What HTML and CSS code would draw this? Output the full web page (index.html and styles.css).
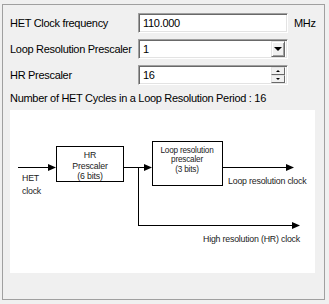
FILE: index.html
```html
<!DOCTYPE html>
<html lang="en">
<head>
    <meta charset="UTF-8">
    <title>HET Clock</title>
    <link rel="stylesheet" href="styles.css">
</head>
<body>
    <div class="panel">
        <!-- Champs de configuration -->
        <div class="form">
            <div class="label">HET Clock frequency</div>
            <div class="field">110.000</div>
            <div class="unit">MHz</div>

            <div class="label">Loop Resolution Prescaler</div>
            <div class="field">
                <span>1</span>
                <span class="drop-btn"><span class="tri-down"></span></span>
            </div>
            <div></div>

            <div class="label">HR Prescaler</div>
            <div class="field">
                <span>16</span>
                <span class="spin">
                    <span class="spin-btn"><span class="tri-up small"></span></span>
                    <span class="spin-btn"><span class="tri-down small"></span></span>
                </span>
            </div>
            <div></div>
        </div>

        <div class="summary">Number of HET Cycles in a Loop Resolution Period : 16</div>

        <!-- Schéma -->
        <div class="diagram">
            <svg width="305" height="163" viewBox="0 0 305 163">
                <g stroke="#000" stroke-width="1" fill="none">
                    <line x1="8" y1="57.5" x2="40" y2="57.5"/>
                    <rect x="46.5" y="36.5" width="67" height="35"/>
                    <line x1="114" y1="57.5" x2="136" y2="57.5"/>
                    <line x1="128.5" y1="57.5" x2="128.5" y2="115.5"/>
                    <line x1="128" y1="115.5" x2="284" y2="115.5"/>
                    <rect x="142.5" y="31.5" width="70" height="44"/>
                    <line x1="213" y1="57.5" x2="278" y2="57.5"/>
                </g>
                <g fill="#000">
                    <polygon points="38,54 46,57.5 38,61"/>
                    <polygon points="134,54 142,57.5 134,61"/>
                    <polygon points="276,54 284,57.5 276,61"/>
                    <polygon points="282,112 290,115.5 282,119"/>
                </g>
                <g class="dtext">
                    <text x="80" y="48" text-anchor="middle">HR</text>
                    <text x="80" y="59" text-anchor="middle">Prescaler</text>
                    <text x="80" y="69" text-anchor="middle">(6 bits)</text>
                    <text x="12" y="71">HET</text>
                    <text x="12" y="84">clock</text>
                    <text class="small-text" x="177" y="43" text-anchor="middle">Loop resolution</text>
                    <text class="small-text" x="177" y="52" text-anchor="middle">prescaler</text>
                    <text class="small-text" x="177" y="62" text-anchor="middle">(3 bits)</text>
                    <text x="218" y="74">Loop resolution clock</text>
                    <text x="193" y="132">High resolution (HR) clock</text>
                </g>
            </svg>
        </div>
    </div>
</body>
</html>
```

FILE: styles.css
```css
body {
    margin: 0;
    background-color: #f0f0f0;
    font-family: "Liberation Sans", Arial, sans-serif;
    font-size: 11px;
    letter-spacing: -0.3px;
    color: #000;
}
.panel {
    margin: 4px 0 0 2px;
    width: 323px;
    height: 296px;
    border: 1px solid #a0a0a0;
    padding: 8px 0 0 7px;
    box-sizing: border-box;
}
.form {
    display: grid;
    grid-template-columns: 128px 150px 30px;
    grid-auto-rows: 20px;
    row-gap: 6px;
    align-items: center;
}
.unit {
    padding-left: 6px;
}
.field {
    height: 20px;
    box-sizing: border-box;
    background-color: #fff;
    border-top: 1px solid #a0a0a0;
    border-left: 1px solid #a0a0a0;
    border-right: 1px solid #fff;
    border-bottom: 1px solid #fff;
    box-shadow: inset 1px 1px #696969, inset -1px -1px #e3e3e3;
    padding: 0 2px 0 4px;
    display: flex;
    align-items: center;
    justify-content: space-between;
    color: #000;
}
.drop-btn {
    width: 14px;
    height: 16px;
    box-sizing: border-box;
    background-color: #f0f0f0;
    border-top: 1px solid #e3e3e3;
    border-left: 1px solid #e3e3e3;
    border-right: 1px solid #696969;
    border-bottom: 1px solid #696969;
    box-shadow: inset 1px 1px #fff, inset -1px -1px #a0a0a0;
    display: flex;
    align-items: center;
    justify-content: center;
}
.spin {
    display: flex;
    flex-direction: column;
    height: 16px;
}
.spin-btn {
    width: 14px;
    height: 8px;
    box-sizing: border-box;
    background-color: #f0f0f0;
    border-top: 1px solid #e3e3e3;
    border-left: 1px solid #e3e3e3;
    border-right: 1px solid #696969;
    border-bottom: 1px solid #696969;
    display: flex;
    align-items: center;
    justify-content: center;
}
.tri-down {
    width: 0;
    height: 0;
    border-left: 4px solid transparent;
    border-right: 4px solid transparent;
    border-top: 4px solid #000;
}
.tri-down.small {
    border-left-width: 2px;
    border-right-width: 2px;
    border-top-width: 2px;
}
.tri-up.small {
    width: 0;
    height: 0;
    border-left: 2px solid transparent;
    border-right: 2px solid transparent;
    border-bottom: 2px solid #000;
}
.summary {
    margin-top: 6px;
    height: 14px;
    line-height: 14px;
}
.diagram {
    margin-top: 5px;
    width: 305px;
    height: 163px;
    background-color: #fff;
}
.diagram svg {
    display: block;
}
.dtext {
    font-family: "Liberation Sans", Arial, sans-serif;
    font-size: 8.8px;
    letter-spacing: -0.2px;
    fill: #222;
}
.dtext .small-text {
    font-size: 8.2px;
}
```
